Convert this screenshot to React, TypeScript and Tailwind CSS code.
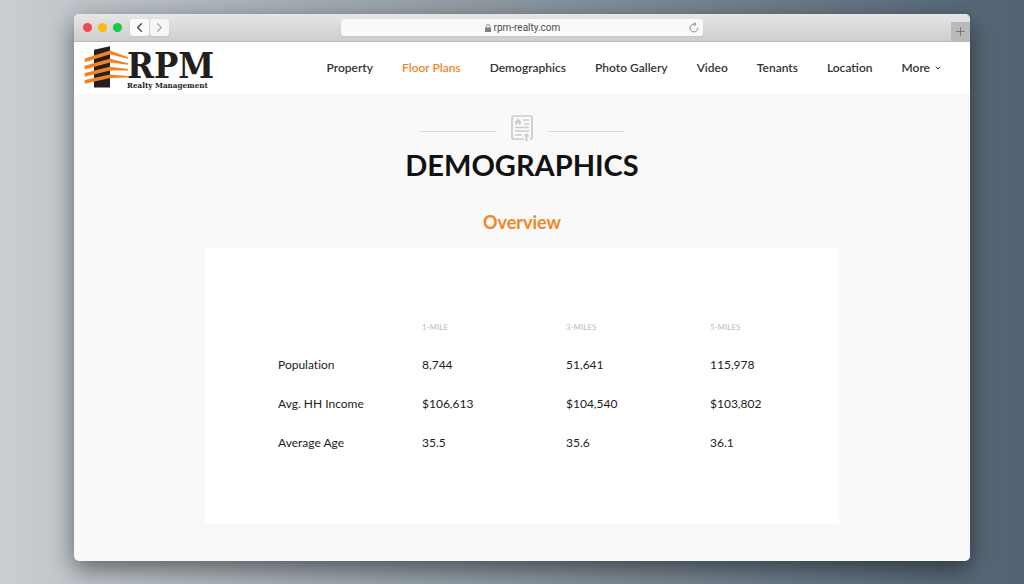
import { ChevronDown, ChevronLeft, ChevronRight, Plus } from 'lucide-react'
import clsx from 'clsx'

const navItems = [
  { label: 'Property' },
  { label: 'Floor Plans', active: true },
  { label: 'Demographics' },
  { label: 'Photo Gallery' },
  { label: 'Video' },
  { label: 'Tenants' },
  { label: 'Location' },
]

const columns = ['1-MILE', '3-MILES', '5-MILES']

const rows = [
  { label: 'Population', values: ['8,744', '51,641', '115,978'] },
  { label: 'Avg. HH Income', values: ['$106,613', '$104,540', '$103,802'] },
  { label: 'Average Age', values: ['35.5', '35.6', '36.1'] },
]

function LockIcon() {
  return (
    <svg viewBox="0 0 6 8" className="h-2 w-[6px]" aria-hidden="true">
      <rect x="0" y="3.5" width="6" height="4.5" rx="0.6" fill="#828282" />
      <path d="M1.2 4V2.4a1.8 1.8 0 0 1 3.6 0V4" fill="none" stroke="#828282" strokeWidth="0.9" />
    </svg>
  )
}

function ReloadIcon() {
  return (
    <svg viewBox="0 0 10 11" className="h-[11px] w-[10px]" aria-hidden="true">
      <path d="M8.8 5.7A3.9 3.9 0 1 1 5 2.1h.9" fill="none" stroke="#7c7c7c" strokeWidth="0.9" />
      <path d="M4.9.3 7 2.1 4.9 4.1" fill="none" stroke="#7c7c7c" strokeWidth="0.9" />
    </svg>
  )
}

function BrowserBar() {
  return (
    <div className="grid h-7 grid-cols-[1fr_minmax(0,362px)_1fr] items-center border-b border-[#b9b9b9] bg-linear-to-b from-[#e6e6e6] to-[#cecece]">
      <div className="flex items-center pl-[9px]">
        <div className="flex gap-[6px]">
          <span className="size-[9px] rounded-full bg-[#f5484b]" />
          <span className="size-[9px] rounded-full bg-[#fbb912]" />
          <span className="size-[9px] rounded-full bg-[#12cd44]" />
        </div>
        <div className="ml-2 flex gap-px">
          <button
            type="button"
            aria-label="Back"
            className="flex h-[17px] w-[19px] items-center justify-center rounded-[3px] bg-[#fafafa] text-[#444] shadow-xs"
          >
            <ChevronLeft size={15} strokeWidth={2} />
          </button>
          <button
            type="button"
            aria-label="Forward"
            className="flex h-[17px] w-[19px] items-center justify-center rounded-[3px] bg-[#f6f6f6] text-[#adadad] shadow-xs"
          >
            <ChevronRight size={15} strokeWidth={2} />
          </button>
        </div>
      </div>

      {/* Address */}
      <div className="flex h-[17px] items-center rounded-[3px] bg-[#f9f9f9] pr-1 pl-[14px] shadow-xs">
        <div className="flex flex-1 items-center justify-center gap-[3px]">
          <LockIcon />
          <input
            type="text"
            aria-label="Address"
            defaultValue="rpm-realty.com"
            className="w-[66px] bg-transparent font-['Roboto',sans-serif] text-[10px] leading-4 text-[#4c4c4c] outline-none"
          />
        </div>
        <button type="button" aria-label="Reload">
          <ReloadIcon />
        </button>
      </div>

      <button
        type="button"
        aria-label="New tab"
        className="flex size-[19px] items-center justify-center self-end justify-self-end bg-[#b9b9b9] text-[#666]"
      >
        <Plus size={13} strokeWidth={1.5} />
      </button>
    </div>
  )
}

function Logo() {
  return (
    <a href="#" className="flex items-start text-[#231f20]">
      <svg viewBox="0 0 46 44" className="h-11 w-[46px]" aria-hidden="true">
        <path d="M10 3.700 26 0.300V41.500H10Z" fill="#231f20" />
        <g fill="#f58220">
          <path d="M0.700 12.500 26 4.600l18 6.700v1.500L26 8.300 0.700 16.200Z" />
          <path d="M0.700 19.800 26 12.800l18 4.500v1.500L26 16.500 0.700 23.500Z" />
          <path d="M0.700 27 26 20.700l18 2.300v1.500L26 24.400 0.700 30.700Z" />
          <path d="M0.700 34 26 28.500l18 1.500v1.600L26 32.100 0.700 37.700Z" />
        </g>
      </svg>
      <span className="-ml-[3px] flex flex-col pt-[3px] font-['DejaVu_Serif_Condensed','DejaVu_Serif',serif] font-bold">
        <span className="text-[36px] leading-8">RPM</span>
        <span className="text-[8px] leading-[9px]">Realty Management</span>
      </span>
    </a>
  )
}

function SiteHeader() {
  return (
    <header className="flex h-[51px] items-center justify-between bg-white pr-[28px] pl-[10px]">
      <Logo />
      <nav className="flex items-center gap-[29px] text-[12px] font-semibold text-[#333]">
        {navItems.map((item) => (
          <a key={item.label} href="#" className={clsx(item.active && 'text-[#f2871f]')}>
            {item.label}
          </a>
        ))}
        <button type="button" className="flex items-center gap-1">
          More
          <ChevronDown size={8} strokeWidth={3} />
        </button>
      </nav>
    </header>
  )
}

function ReportIcon() {
  return (
    <svg viewBox="0 0 22 26" className="h-[26px] w-[22px]" fill="none" stroke="#cbcbcb" strokeWidth="1.700" aria-hidden="true">
      <path d="M13 24H3a2 2 0 0 1-2-2V3a2 2 0 0 1 2-2h16a2 2 0 0 1 2 2v19a2 2 0 0 1-2 2" />
      <path d="M12 5h6M13 9h5M4 12.500h14M4 16h14M4 20h7" />
      <path d="M3 7.500 7 3.500l4 4H9.500V10h-1.700V8H6.200v2H4.500V7.500Z" fill="#cbcbcb" stroke="none" />
      <path d="M12.500 21.500 15.500 18l3 3.500h-2V26h-2v-4.500Z" fill="#cbcbcb" stroke="none" />
    </svg>
  )
}

function DemographicsTable() {
  return (
    <div className="w-full max-w-[634px] bg-white pt-[69px] pb-[62px] pl-[58px]">
      <table className="w-full table-fixed text-left text-[12px] text-[#1c1c1c] [font-variant-ligatures:none]">
        <thead>
          <tr className="h-7 align-top text-[8px] leading-5 text-[#bdbdbd]">
            <td />
            {columns.map((column) => (
              <th key={column} scope="col" className="px-[15px] font-normal">
                {column}
              </th>
            ))}
          </tr>
        </thead>
        <tbody>
          {rows.map((row) => (
            <tr key={row.label} className="h-[39px]">
              <th scope="row" className="px-[15px] font-normal">
                {row.label}
              </th>
              {row.values.map((value) => (
                <td key={value} className="px-[15px]">
                  {value}
                </td>
              ))}
            </tr>
          ))}
        </tbody>
      </table>
    </div>
  )
}

export default function App() {
  return (
    <div className="flex min-h-screen bg-linear-to-r from-[#c9ced2] via-[#8c98a1] to-[#516373] pt-[14px] pr-[54px] pb-[23px] pl-[74px] font-['Lato',sans-serif]">
      <div className="flex flex-1 flex-col overflow-hidden rounded-[5px] bg-[#f9f9f9] shadow-[0_8px_24px_rgba(0,0,0,0.5)]">
        <BrowserBar />
        <SiteHeader />
        <main className="flex flex-1 flex-col items-center px-6 pt-[22px] pb-9">
          <div className="flex items-end gap-[15px]">
            <span className="mb-[9px] h-px w-[77px] bg-[#dcdcdc]" />
            <ReportIcon />
            <span className="mb-[9px] h-px w-[77px] bg-[#dcdcdc]" />
          </div>
          <h1 className="mt-1 text-[29px] leading-10 font-bold text-[#111]">DEMOGRAPHICS</h1>
          <h2 className="mt-[25px] mb-[14px] text-[18px] leading-6 font-bold text-[#f2871f]">Overview</h2>
          <DemographicsTable />
        </main>
      </div>
    </div>
  )
}
